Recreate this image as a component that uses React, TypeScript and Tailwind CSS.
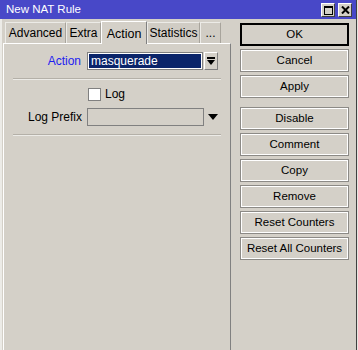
const font = { fontFamily: '"Liberation Sans", Arial, sans-serif' };

function TitleButton({ kind }: { kind: 'max' | 'close' }) {
  return (
    <div className="w-[14px] h-[14px] bg-[#d4d0c8] border-t border-l border-white border-r border-b border-r-[#404040] border-b-[#404040] flex items-center justify-center">
      {kind === 'max' ? (
        <div className="w-[9px] h-[9px] border border-black border-t-2" />
      ) : (
        <svg width="9" height="8" viewBox="0 0 9 8">
          <path d="M1 0.5 L8 7.5 M8 0.5 L1 7.5" stroke="#000" strokeWidth="2" />
        </svg>
      )}
    </div>
  );
}

function Tab({ label, width, active }: { label: string; width: number; active?: boolean }) {
  if (active) {
    return (
      <div
        className="h-[23px] -mb-px bg-[#d4d0c8] border-t border-l border-white border-r border-r-[#808080] flex items-start justify-center pt-[3px] text-[12.5px] text-black relative z-10"
        style={{ width }}
      >
        {label}
      </div>
    );
  }
  return (
    <div
      className="h-[21px] bg-[#d0ccc4] border-t border-l border-[#ecebe7] border-r border-r-[#a8a49c] flex items-center justify-center text-[12px] text-black"
      style={{ width }}
    >
      {label}
    </div>
  );
}

function Btn({ label, primary }: { label: string; primary?: boolean }) {
  return (
    <div
      className={
        'h-[23px] w-[109px] flex items-center justify-center text-[11.5px] text-black bg-[#d4d0c8] ' +
        (primary
          ? 'border-2 border-black'
          : 'border border-[#8c8a86] shadow-[inset_1px_1px_0_#ffffff,inset_-1px_-1px_0_#ffffff]')
      }
    >
      {label}
    </div>
  );
}

export default function App() {
  return (
    <div className="w-[358px] h-[350px] overflow-hidden bg-[#d4d0c8] flex" style={font}>
      <div className="w-[356px] h-full flex flex-col border-l-2 border-[#ecebe7]">
        <div className="h-[19px] -ml-[2px] bg-[#4848c8] flex items-center justify-between pl-[6px] pr-[4px]">
          <span className="text-white text-[11.5px]">New NAT Rule</span>
          <div className="flex gap-[3px] pt-px">
            <TitleButton kind="max" />
            <TitleButton kind="close" />
          </div>
        </div>

        <div className="flex flex-1">
          <div className="w-[229px] flex flex-col pt-[3px] pl-px">
            <div className="flex items-end h-[21px] pl-[2px]">
              <Tab label="Advanced" width={61} />
              <Tab label="Extra" width={35} />
              <Tab label="Action" width={46} active />
              <Tab label="Statistics" width={53} />
              <Tab label="..." width={21} />
            </div>
            <div className="flex-1 border-t border-l border-white border-r border-r-[#808080] pt-[8px] px-[8px]">
              <div className="flex items-center h-[18px]">
                <span className="w-[75px] text-right pr-[6px] text-[12px] text-[#1e1ef0]">Action</span>
                <div className="w-[116px] h-[18px] border border-[#808080] bg-white p-px">
                  <div className="h-full bg-[#0a246a] text-white text-[12px] leading-[14px] pl-[2px]">masquerade</div>
                </div>
                <div className="ml-[1px] w-[14px] h-[18px] border border-t-white border-l-white border-r-[#808080] border-b-[#808080] flex items-center justify-center">
                  <svg width="8" height="8" viewBox="0 0 8 8">
                    <path d="M0 1 H8" stroke="#000" strokeWidth="2" />
                    <path d="M0 3 L8 3 L4 8 Z" fill="#000" />
                  </svg>
                </div>
              </div>

              <div className="mt-[8px] mb-[7px] h-[2px] border-t border-[#b4b0a8] border-b border-b-[#ecebe7] mx-[1px]" />

              <div className="flex items-center h-[14px]">
                <div className="ml-[76px] w-[13px] h-[13px] bg-white border border-[#808080]" />
                <span className="ml-[4px] text-[12px] text-black">Log</span>
              </div>

              <div className="flex items-center h-[18px] mt-[7px]">
                <span className="w-[75px] text-right pr-[5px] text-[12px] text-black">Log Prefix</span>
                <div className="w-[117px] h-[18px] border border-[#808080] bg-[#d4d0c8]" />
                <svg className="ml-[4px]" width="10" height="6" viewBox="0 0 10 6">
                  <path d="M0 0 L10 0 L5 6 Z" fill="#000" />
                </svg>
              </div>

              <div className="mt-[8px] h-[2px] border-t border-[#b4b0a8] border-b border-b-[#ecebe7] mx-[1px]" />
            </div>
          </div>

          <div className="ml-[9px] pt-[4px] flex flex-col gap-[3px]">
            <Btn label="OK" primary />
            <Btn label="Cancel" />
            <Btn label="Apply" />
            <div className="h-[3px]" />
            <Btn label="Disable" />
            <Btn label="Comment" />
            <Btn label="Copy" />
            <Btn label="Remove" />
            <Btn label="Reset Counters" />
            <Btn label="Reset All Counters" />
          </div>
        </div>
      </div>
      <div className="w-px h-full bg-[#404040]" />
      <div className="w-px h-full bg-[#e8e6e0]" />
    </div>
  );
}
